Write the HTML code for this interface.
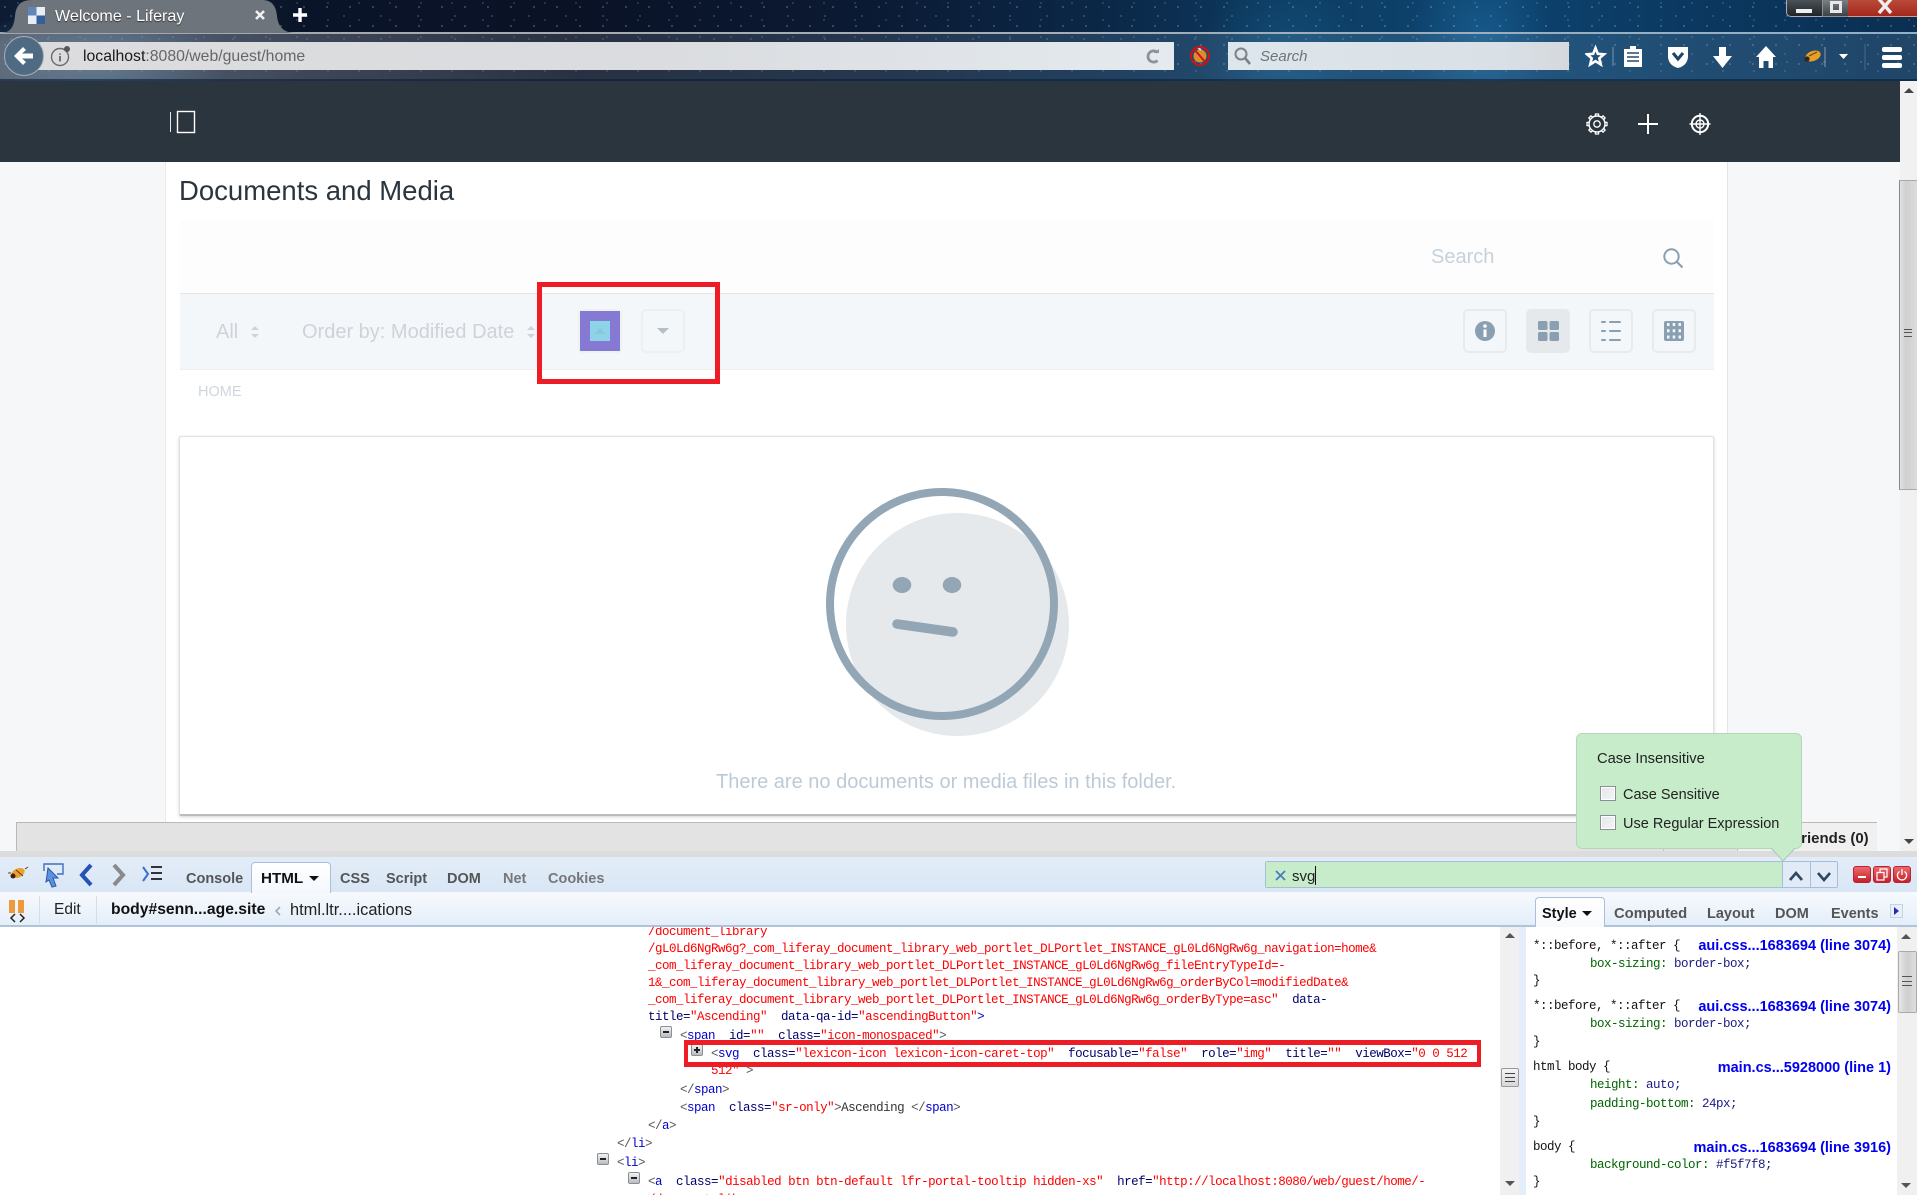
<!DOCTYPE html>
<html lang="en"><head><meta charset="utf-8"><title>Welcome - Liferay</title>
<style>
html,body{margin:0;padding:0;width:1917px;height:1195px;overflow:hidden;background:#fff;font-family:"Liberation Sans",sans-serif}
*{box-sizing:border-box}
.a{position:absolute}
.t{position:absolute;white-space:pre;line-height:20px;margin-top:1px}
.c{position:absolute;white-space:pre;font:12.5px/16px "Liberation Mono",monospace;letter-spacing:-.5px;color:#333;margin-top:1px}
.r{color:#f00}.b{color:#0000d0}.n{color:#00006e}.g{color:#555}.p{color:#006400}.v{color:#1a1a80}.k{color:#111}
.tab{position:absolute;top:862px;margin-top:2px;font:bold 14.5px/30px "Liberation Sans",sans-serif;color:#555;white-space:pre}
.src{position:absolute;right:26px;margin-top:1px;font:bold 14.5px/18px "Liberation Sans",sans-serif;color:#0000f0;white-space:pre}
.btn{position:absolute;top:309px;width:44px;height:44px;border:2px solid #e7ebee;border-radius:5px}
.ex{position:absolute;width:12px;height:12px;border:1px solid #8a8f96;background:linear-gradient(#f2f2f2,#b8bcc2);border-radius:2px}
.ex:after{content:"";position:absolute;left:2px;top:4px;width:6px;height:2px;background:#222}
.arr{position:absolute;width:0;height:0;border-left:5px solid transparent;border-right:5px solid transparent}
.up{border-bottom:5px solid #555}.dn{border-top:5px solid #555}
</style></head><body>

<!-- browser chrome -->
<div class="a" style="left:0;top:0;width:1917px;height:81px;overflow:hidden;background:linear-gradient(90deg,#0d1c33 0,#10233f 6%,#0a1428 16%,#0a1226 30%,#0b1a33 45%,#0b2848 58%,#0d3d63 68%,#0d4470 78%,#0b3860 88%,#0a2f52 100%)">
 <div class="a" style="left:0;top:0;width:100%;height:100%;background:radial-gradient(ellipse 140px 50px at 90px 60px,rgba(90,160,200,.5),transparent),radial-gradient(ellipse 70px 90px at 1480px 40px,rgba(40,130,190,.35),transparent),radial-gradient(ellipse 80px 90px at 1280px 60px,rgba(30,120,170,.3),transparent)"></div>
 <div class="a" style="left:0;top:0;width:100%;height:100%;opacity:.32;background-image:radial-gradient(circle at 5px 7px,#fff .6px,transparent 1.1px),radial-gradient(circle at 18px 3px,#cfe0ff .5px,transparent 1px),radial-gradient(circle at 11px 16px,#fff .5px,transparent 1px);background-size:23px 19px,31px 17px,37px 23px"></div>
 <div class="a" style="left:0;top:34px;width:100%;height:47px;background:linear-gradient(90deg,rgba(150,155,165,.55),rgba(120,130,140,.28) 30%,rgba(120,160,190,.2) 60%,rgba(120,160,190,.2))"></div>
 <div class="a" style="left:0;top:32px;width:100%;height:2px;background:linear-gradient(90deg,#a3a7ad,#a7adb5 50%,#8fb0c8)"></div>
 <div class="a" style="left:0;top:79px;width:100%;height:2px;background:rgba(5,30,60,.6)"></div>
 <!-- tab -->
 <svg class="a" style="left:0;top:0" width="300" height="34"><path d="M0 33C12 33 14 25 15 16C16 6 20 0 32 0H262C272 0 276 6 277 16C278 25 282 33 296 33Z" fill="#6e747c"/></svg>
 <!-- favicon -->
 <div class="a" style="left:28px;top:7px;width:17px;height:17px;background:conic-gradient(#e8eef5 0 25%,#33609a 0 50%,#e8eef5 0 75%,#5f88b8 0)"></div>
 <div class="t" style="left:55px;top:5px;font-size:16.1px;color:#fff;text-shadow:0 1px 1px #333">Welcome - Liferay</div>
 <svg class="a" style="left:254px;top:8px" width="12" height="14"><path d="M2 3L10 11M10 3L2 11" stroke="#f0f0f0" stroke-width="2.6"/></svg>
 <svg class="a" style="left:292px;top:6px" width="16" height="18"><path d="M8 2V16M1 9H15" stroke="#fff" stroke-width="3.4"/></svg>
 <!-- url bar -->
 <div class="a" style="left:30px;top:42px;width:1144px;height:28px;background:linear-gradient(90deg,#dcdcde,#dadcdf 55%,#e4eaef 100%)"></div>
 <div class="a" style="left:4px;top:36px;width:40px;height:40px;border-radius:50%;background:#4f6b84;border:1px solid #a7b0b8"></div>
 <svg class="a" style="left:12px;top:44px" width="24" height="24"><path d="M11 3L2 12L11 21L14 18L10 14.5H21V9.5H10L14 6Z" fill="#fff"/></svg>
 <svg class="a" style="left:50px;top:44px" width="22" height="24"><circle cx="10" cy="13" r="8.5" fill="none" stroke="#6b6b6b" stroke-width="1.4"/><path d="M10 9.5V10.8M10 12V17.5" stroke="#666" stroke-width="1.8"/><circle cx="17" cy="5" r="3" fill="#555"/></svg>
 <div class="t" style="left:83px;top:46px;font-size:15.8px;color:#666"><span style="color:#1a1a1a">localhost</span>:8080/web/guest/home</div>
 <svg class="a" style="left:1146px;top:49px" width="15" height="15"><path d="M11.5 3.5A5.6 5.6 0 1 0 11.5 11.5" fill="none" stroke="#8b9298" stroke-width="2.8"/><path d="M7.5 4H13V0Z" fill="#8b9298"/></svg>
 <svg class="a" style="left:1189px;top:44px" width="22" height="24"><circle cx="11" cy="12" r="6.5" fill="#e08a2c"/><path d="M8 3L12 6" stroke="#ddd" stroke-width="2"/><circle cx="11" cy="12" r="9" fill="none" stroke="#c8141e" stroke-width="2"/><path d="M5 5L17 19" stroke="#c8141e" stroke-width="2"/></svg>
 <!-- search -->
 <div class="a" style="left:1228px;top:42px;width:341px;height:28px;background:linear-gradient(90deg,#dde6ec,#d9e0e6 80%,#d5d9dd)"></div>
 <svg class="a" style="left:1233px;top:46px" width="20" height="20"><circle cx="8" cy="8" r="5.5" fill="none" stroke="#7c8286" stroke-width="2"/><path d="M12 12L17 18" stroke="#7c8286" stroke-width="2.6"/></svg>
 <div class="t" style="left:1260px;top:46px;font-size:15px;font-style:italic;color:#6f7477">Search</div>
 <!-- toolbar icons -->
 <svg class="a" style="left:1585px;top:44px" width="330" height="26">
  <path d="M11 4L13.3 9.8L19.5 10.3L14.8 14.3L16.3 20.5L11 17.2L5.7 20.5L7.2 14.3L2.5 10.3L8.7 9.8Z" fill="none" stroke="#fff" stroke-width="2.6" transform="translate(-.5,0)"/>
  <path d="M28 3V22" stroke="rgba(255,255,255,.4)"/>
  <path d="M40 6H46V3H52V6H58V24H40Z" fill="#fff" transform="translate(-1,-1)"/>
  <path d="M43 10H55M43 14H55M43 18H55" stroke="#2a4a68" stroke-width="1.6" transform="translate(-1,-1)"/>
  <g transform="translate(-1,0)"><path d="M84 3H104V12C104 20 98 23 94 24C90 23 84 20 84 12Z" fill="#fff"/><path d="M89 9L94 15L99 9" fill="none" stroke="#1d4568" stroke-width="3"/></g>
  <path d="M134 3H141V12H147L137.5 24L128 12H134Z" fill="#fff"/>
  <path d="M181 2L191 13H188V24H183.5V17H178.5V24H174V13H171Z" fill="#fff"/>
  <g transform="translate(-2,0)"><ellipse cx="230" cy="12" rx="8" ry="5" transform="rotate(-22 230 12)" fill="#e6a02a"/><circle cx="224" cy="15" r="2.6" fill="#3a2415"/><path d="M226 12L234 8" stroke="#7a3a10" stroke-width="1.2"/></g>
  <path d="M240 3V23" stroke="rgba(255,255,255,.45)"/>
  <path d="M254 10H263L258.5 15Z" fill="#fff"/>
  <path d="M280 0V26" stroke="rgba(255,255,255,.18)"/>
  <g transform="translate(-2,0)"><rect x="299" y="3" width="20" height="5" rx="2" fill="#fff"/><rect x="299" y="11" width="20" height="5" rx="2" fill="#fff"/><rect x="299" y="19" width="20" height="5" rx="2" fill="#fff"/></g>
 </svg>
 <!-- window buttons -->
 <div class="a" style="left:1786px;top:0;width:44px;height:17px;background:linear-gradient(#4a5157,#1f2529);border:1px solid #aab;border-top:0;border-radius:0 0 0 5px"></div>
 <div class="a" style="left:1822px;top:0;width:27px;height:17px;background:linear-gradient(#7a7f84,#3c4247);border:1px solid #8a8f94;border-top:0"></div>
 <div class="a" style="left:1848px;top:0;width:69px;height:17px;background:linear-gradient(#b84a38,#a5281c);border-bottom:1px solid #d98"></div>
 <div class="a" style="left:1796px;top:9px;width:16px;height:4px;background:#f0f0f0"></div>
 <div class="a" style="left:1830px;top:1px;width:12px;height:12px;border:3px solid #e8e8e8"></div>
 <svg class="a" style="left:1876px;top:0" width="18" height="15"><path d="M3 -1L15 13M15 -1L3 13" stroke="#eee" stroke-width="3.4"/></svg>
</div>

<!-- page -->
<div class="a" style="left:0;top:81px;width:1900px;height:81px;background:#2b353d"></div>
<div class="a" style="left:1900px;top:81px;width:17px;height:771px;background:#f1f1f1"></div>
<div class="a" style="left:0;top:162px;width:166px;height:690px;background:#f5f7f8;border-right:1px solid #e7e9eb"></div>
<div class="a" style="left:1727px;top:162px;width:173px;height:690px;background:#f5f7f8;border-left:1px solid #e2e5e8"></div>
<!-- scrollbar -->
<div class="arr up" style="left:1904px;top:88px;border-bottom-color:#444"></div>
<div class="a" style="left:1899px;top:180px;width:18px;height:310px;background:linear-gradient(90deg,#e2e2e2,#cfcfcf 35%,#dcdcdc);border-left:1px solid #888;border-bottom:1px solid #aaa;border-top:1px solid #aaa"></div>
<div class="a" style="left:1904px;top:329px;width:8px;height:8px;border-top:1px solid #555;border-bottom:1px solid #555"><div class="a" style="left:0;top:2px;width:8px;height:1px;background:#555"></div></div>
<div class="arr dn" style="left:1904px;top:839px;border-top-color:#444"></div>

<!-- navbar icons -->
<svg class="a" style="left:165px;top:108px" width="34" height="28"><path d="M5.5 4V24" stroke="#e8e8e8"/><rect x="12.5" y="3.5" width="17" height="21" fill="none" stroke="#fff" stroke-width="1.4"/></svg>
<svg class="a" style="left:1585px;top:112px" width="24" height="24"><circle cx="12" cy="12" r="8" fill="none" stroke="#fff" stroke-width="1.4"/><circle cx="12" cy="12" r="3.2" fill="none" stroke="#fff" stroke-width="1.3"/><g fill="none" stroke="#fff" stroke-width="1.3"><path id="tooth" d="M10.2 4.2L10.5 2H13.5L13.8 4.2"/><path d="M10.2 4.2L10.5 2H13.5L13.8 4.2" transform="rotate(45 12 12)"/><path d="M10.2 4.2L10.5 2H13.5L13.8 4.2" transform="rotate(90 12 12)"/><path d="M10.2 4.2L10.5 2H13.5L13.8 4.2" transform="rotate(135 12 12)"/><path d="M10.2 4.2L10.5 2H13.5L13.8 4.2" transform="rotate(180 12 12)"/><path d="M10.2 4.2L10.5 2H13.5L13.8 4.2" transform="rotate(225 12 12)"/><path d="M10.2 4.2L10.5 2H13.5L13.8 4.2" transform="rotate(270 12 12)"/><path d="M10.2 4.2L10.5 2H13.5L13.8 4.2" transform="rotate(315 12 12)"/></g></svg>
<svg class="a" style="left:1636px;top:112px" width="24" height="24"><path d="M12 2V22M2 12H22" stroke="#fff" stroke-width="2"/></svg>
<svg class="a" style="left:1688px;top:112px" width="24" height="24"><circle cx="12" cy="12" r="8.2" fill="none" stroke="#fff" stroke-width="2"/><circle cx="12" cy="12" r="4" fill="none" stroke="#fff" stroke-width="1.4"/><path d="M12 1V23M1.5 12H22.5" stroke="#fff" stroke-width="1.4"/></svg>

<!-- content -->
<div class="t" style="left:179px;top:174px;font-size:27.5px;line-height:32px;color:#2b353d">Documents and Media</div>
<div class="a" style="left:180px;top:220px;width:1534px;height:73px;background:#fdfdfe"></div>
<div class="a" style="left:180px;top:293px;width:1534px;height:77px;background:#f4f7fa;border-top:1px solid #e3e7ea;border-bottom:1px solid #eceff2"></div>
<div class="t" style="left:1431px;top:246px;font-size:20px;color:#c5d1dc">Search</div>
<svg class="a" style="left:1662px;top:247px" width="22" height="22"><circle cx="9.5" cy="9.5" r="7.2" fill="none" stroke="#8aa0b2" stroke-width="2"/><path d="M14.5 14.5L20.5 20.5" stroke="#8aa0b2" stroke-width="2.2"/></svg>
<div class="t" style="left:216px;top:321px;font-size:20px;color:#ced3da">All</div>
<svg class="a" style="left:250px;top:325px" width="10" height="14"><path d="M1 5L5 1L9 5ZM1 9L5 13L9 9Z" fill="#cdd3d9"/></svg>
<div class="t" style="left:302px;top:321px;font-size:20px;color:#ced3da">Order by: Modified Date</div>
<svg class="a" style="left:526px;top:325px" width="10" height="14"><path d="M1 5L5 1L9 5ZM1 9L5 13L9 9Z" fill="#cdd3d9"/></svg>
<div class="a" style="left:578px;top:309px;width:44px;height:44px;border:2px solid #eef1f4;border-radius:4px"></div>
<div class="a" style="left:580px;top:311px;width:40px;height:40px;background:#8579d3"></div>
<div class="a" style="left:590px;top:321px;width:20px;height:20px;background:#8fd3e8"></div>
<div class="arr" style="left:594px;top:328px;border-left-width:6px;border-right-width:6px;border-bottom:6px solid #87c8dc"></div>
<div class="a" style="left:641px;top:309px;width:44px;height:44px;border:2px solid #ecf0f3;border-radius:5px"></div>
<div class="arr" style="left:657px;top:328px;border-left-width:6px;border-right-width:6px;border-top:6px solid #b3bfc9"></div>
<div class="a" style="left:537px;top:282px;width:183px;height:102px;border:5px solid #ee1c25"></div>
<div class="t" style="left:198px;top:381px;font-size:14.5px;color:#ced6de">HOME</div>

<div class="btn" style="left:1463px"></div>
<svg class="a" style="left:1474px;top:320px" width="22" height="22"><circle cx="11" cy="11" r="10" fill="#8aa0b2"/><path d="M11 9.5V17" stroke="#fff" stroke-width="3"/><circle cx="11" cy="6" r="1.8" fill="#fff"/></svg>
<div class="btn" style="left:1526px;background:#e5e9eb;border-color:#e5e9eb"></div>
<svg class="a" style="left:1538px;top:320px" width="21" height="21"><rect x="0" y="1" width="9.5" height="9" rx="1.5" fill="#8aa0b2"/><rect x="11.5" y="1" width="9.5" height="9" rx="1.5" fill="#8aa0b2"/><rect x="0" y="12" width="9.5" height="9" rx="1.5" fill="#8aa0b2"/><rect x="11.5" y="12" width="9.5" height="9" rx="1.5" fill="#8aa0b2"/></svg>
<div class="btn" style="left:1589px"></div>
<svg class="a" style="left:1600px;top:320px" width="22" height="22"><path d="M2 2H5M10 2H20M2 11H5M10 11H20M2 20H5M10 20H20" stroke="#8aa0b2" stroke-width="2" stroke-linecap="round"/></svg>
<div class="btn" style="left:1652px"></div>
<svg class="a" style="left:1664px;top:321px" width="20" height="20"><rect x="0" y="0" width="20" height="20" rx="2" fill="#8aa0b2"/><path d="M3 3.5H5.5M8.7 3.5H11.2M14.5 3.5H17M3 9.8H5.5M8.7 9.8H11.2M14.5 9.8H17M3 16H5.5M8.7 16H11.2M14.5 16H17" stroke="#f4f7fa" stroke-width="3"/></svg>

<!-- empty card -->
<div class="a" style="left:179px;top:436px;width:1535px;height:380px;background:#fff;border:1px solid #e2e2e2;border-bottom:2px solid #bcbcbc;box-shadow:0 1px 3px rgba(0,0,0,.18);border-radius:2px"></div>
<svg class="a" style="left:800px;top:470px" width="300" height="290">
 <circle cx="157.5" cy="154.5" r="111.5" fill="#e5e9eb"/>
 <circle cx="142" cy="134" r="112" fill="none" stroke="#92a6b6" stroke-width="8"/>
 <ellipse cx="102" cy="115" rx="9.3" ry="8" fill="#92a6b6"/>
 <ellipse cx="152" cy="115" rx="9.3" ry="8" fill="#92a6b6"/>
 <path d="M97 154L153 162" stroke="#92a6b6" stroke-width="9.5" stroke-linecap="round"/>
</svg>
<div class="t" style="left:716px;top:771px;font-size:20px;color:#bdcad6">There are no documents or media files in this folder.</div>

<!-- dock -->
<div class="a" style="left:16px;top:822px;width:1861px;height:30px;background:#e3e3e3;border:1px solid #b9b9b9;border-bottom:0"></div>
<div class="a" style="left:1663px;top:823px;width:1px;height:29px;background:#c4c4c4"></div>
<div class="a" style="left:1737px;top:823px;width:140px;height:29px;background:#f0f0f0;border-left:1px solid #c4c4c4"></div>
<div class="t" style="left:1792px;top:828px;font-size:15px;font-weight:bold;color:#222">Friends (0)</div>

<!-- firebug -->
<div class="a" style="left:0;top:851px;width:1917px;height:7px;background:#dcdcdc"></div>
<div class="a" style="left:0;top:857px;width:1917px;height:36px;background:linear-gradient(#e2edf8,#d9e6f4);border-bottom:1px solid #a9c0dc"></div>
<div class="a" style="left:0;top:892px;width:1917px;height:35px;background:linear-gradient(#f7fafe,#e4eef9);border-bottom:2px solid #b0c3dc"></div>

<svg class="a" style="left:6px;top:862px" width="160" height="30">
 <ellipse cx="12" cy="11" rx="7" ry="4.5" transform="rotate(-25 12 11)" fill="#e8a32c"/><circle cx="7" cy="14" r="2.5" fill="#3a2415"/><path d="M10 8L17 14M2 11H5M19 7L22 5" stroke="#6b3b12"/>
 <g transform="translate(1,-1)"><path d="M37 10V3H56V13H50" fill="none" stroke="#3f6fc0" stroke-width="1.4"/><path d="M41 7L51 17L46 17L49 25L45 26L42 19L39 21Z" fill="#5d93de" stroke="#2a55a8"/></g>
 <path d="M85 3L76 13L85 23" fill="none" stroke="#2553b5" stroke-width="4"/>
 <path d="M108 3L117 13L108 23" fill="none" stroke="#8a8a8a" stroke-width="4"/>
 <path d="M137 5L142 12L137 19" fill="none" stroke="#3a6fd0" stroke-width="2"/><path d="M145 5H156M145 11H156M145 17H156" stroke="#333" stroke-width="2"/>
</svg>
<div class="tab" style="left:186px">Console</div>
<div class="a" style="left:251px;top:862px;width:80px;height:31px;background:linear-gradient(#fff,#f4f8fd);border:1px solid #a9c0dc;border-bottom:0;border-radius:4px 4px 0 0"></div>
<div class="tab" style="left:261px;color:#111;font-size:15.2px">HTML</div>
<div class="arr" style="left:309px;top:876px;border-top:5px solid #111"></div>
<div class="tab" style="left:340px">CSS</div>
<div class="tab" style="left:386px">Script</div>
<div class="tab" style="left:447px">DOM</div>
<div class="tab" style="left:503px;color:#777">Net</div>
<div class="tab" style="left:548px;color:#777">Cookies</div>

<!-- firebug row 2 -->
<svg class="a" style="left:8px;top:899px" width="20" height="26"><path d="M1 1H7V14H1ZM10 1H16V14H10Z" fill="#ee9a3a"/><path d="M12 15L16 19L12 23M7 15L3 19L7 23" fill="none" stroke="#222" stroke-width="1.5"/></svg>
<div class="a" style="left:39px;top:896px;width:1px;height:28px;background:#d4dde8"></div>
<div class="a" style="left:96px;top:896px;width:1px;height:28px;background:#d4dde8"></div>
<div class="t" style="left:54px;top:899px;font-size:15.5px;color:#222">Edit</div>
<div class="t" style="left:111px;top:899px;font-size:15.7px;font-weight:bold;color:#111">body#senn...age.site</div>
<svg class="a" style="left:274px;top:905px" width="8" height="12"><path d="M6 2L2 6L6 10" fill="none" stroke="#9fa9b3" stroke-width="1.6"/></svg>
<div class="t" style="left:290px;top:899px;font-size:16.4px;color:#222">html.ltr....ications</div>

<!-- find box -->
<div class="a" style="left:1265px;top:861px;width:573px;height:27px;background:#e0ebf7;border:1px solid #a9bdd6;border-radius:2px"></div>
<div class="a" style="left:1266px;top:862px;width:516px;height:25px;background:#c6ecc9"></div>
<div class="a" style="left:1782px;top:862px;width:1px;height:25px;background:#a9bdd6"></div>
<div class="a" style="left:1810px;top:862px;width:1px;height:25px;background:#a9bdd6"></div>
<svg class="a" style="left:1275px;top:870px" width="11" height="11"><path d="M1 1L10 10M10 1L1 10" stroke="#4a7cc0" stroke-width="1.8"/></svg>
<div class="t" style="left:1292px;top:866px;font-size:15px;color:#222">svg</div>
<div class="a" style="left:1315px;top:866px;width:1px;height:19px;background:#111"></div>
<svg class="a" style="left:1788px;top:869px" width="46" height="14"><path d="M2 11L8 4L14 11" fill="none" stroke="#2e465f" stroke-width="2.6"/><path d="M30 4L36 11L42 4" fill="none" stroke="#2e465f" stroke-width="2.6"/></svg>
<div class="a" style="left:1853px;top:866px;width:18px;height:17px;background:linear-gradient(#ec6a6a,#c8202a);border:1px solid #b23;border-radius:3px"></div>
<div class="a" style="left:1858px;top:876px;width:8px;height:2px;background:#fff"></div>
<div class="a" style="left:1873px;top:866px;width:18px;height:17px;background:linear-gradient(#ec6a6a,#c8202a);border:1px solid #b23;border-radius:3px"></div>
<svg class="a" style="left:1876px;top:868px" width="12" height="13"><path d="M1 4.5H8V12H1ZM4 4V1H11V9H8" fill="none" stroke="#fff" stroke-width="1.2"/></svg>
<div class="a" style="left:1893px;top:866px;width:18px;height:17px;background:linear-gradient(#ec6a6a,#c8202a);border:1px solid #b23;border-radius:3px"></div>
<svg class="a" style="left:1896px;top:868px" width="12" height="13"><path d="M3.5 3.5A4.6 4.6 0 1 0 8.5 3.5M6 1V7" fill="none" stroke="#fff" stroke-width="1.3"/></svg>

<!-- popup -->
<div class="a" style="left:1576px;top:733px;width:226px;height:116px;background:#c6ecc9;border:1px solid #b6d6ba;border-radius:6px"></div>
<svg class="a" style="left:1770px;top:848px" width="26" height="14"><path d="M1 0L13 13L25 0Z" fill="#c6ecc9"/><path d="M1 0L13 13L25 0" fill="none" stroke="#aac8b6"/></svg>
<div class="t" style="left:1597px;top:748px;font-size:14.7px;color:#222">Case Insensitive</div>
<div class="a" style="left:1600px;top:786px;width:16px;height:15px;background:linear-gradient(135deg,#e4e6ea,#f4f5f7);border:1px solid #8a8f96;box-shadow:inset 0 0 0 1px #fff"></div>
<div class="t" style="left:1623px;top:784px;font-size:14.5px;color:#222">Case Sensitive</div>
<div class="a" style="left:1600px;top:815px;width:16px;height:15px;background:linear-gradient(135deg,#e4e6ea,#f4f5f7);border:1px solid #8a8f96;box-shadow:inset 0 0 0 1px #fff"></div>
<div class="t" style="left:1623px;top:813px;font-size:14.5px;color:#222">Use Regular Expression</div>

<!-- side tabs -->
<div class="a" style="left:1535px;top:897px;width:70px;height:31px;background:linear-gradient(#fff,#f7fafd);border:1px solid #a9c0dc;border-bottom:0;border-radius:4px 4px 0 0"></div>
<div class="tab" style="left:1542px;top:897px;color:#111">Style</div>
<div class="arr" style="left:1582px;top:911px;border-top:5px solid #111"></div>
<div class="tab" style="left:1614px;top:897px;font-size:14.8px">Computed</div>
<div class="tab" style="left:1707px;top:897px">Layout</div>
<div class="tab" style="left:1775px;top:897px">DOM</div>
<div class="tab" style="left:1831px;top:897px">Events</div>
<div class="a" style="left:1890px;top:904px;width:13px;height:14px;background:#e8f0fa;border:1px solid #c3d2e4"></div>
<div class="a" style="left:1894px;top:907px;width:0;height:0;border-top:4px solid transparent;border-bottom:4px solid transparent;border-left:5px solid #2a2ab0"></div>

<!-- html pane -->
<div class="a" style="left:0;top:927px;width:1500px;height:268px;overflow:hidden;background:#fff">
 <div class="c r" style="left:648px;top:-4px">/document_library</div>
 <div class="c r" style="left:648px;top:13px">/gL0Ld6NgRw6g?_com_liferay_document_library_web_portlet_DLPortlet_INSTANCE_gL0Ld6NgRw6g_navigation=home&amp;</div>
 <div class="c r" style="left:648px;top:30px">_com_liferay_document_library_web_portlet_DLPortlet_INSTANCE_gL0Ld6NgRw6g_fileEntryTypeId=-</div>
 <div class="c r" style="left:648px;top:47px">1&amp;_com_liferay_document_library_web_portlet_DLPortlet_INSTANCE_gL0Ld6NgRw6g_orderByCol=modifiedDate&amp;</div>
 <div class="c" style="left:648px;top:64px"><span class="r">_com_liferay_document_library_web_portlet_DLPortlet_INSTANCE_gL0Ld6NgRw6g_orderByType=asc"</span>  <span class="n">data-</span></div>
 <div class="c" style="left:648px;top:81px"><span class="n">title=</span><span class="r">"Ascending"</span>  <span class="n">data-qa-id=</span><span class="r">"ascendingButton"</span><span class="b">&gt;</span></div>
 <div class="ex" style="left:660px;top:99px"></div>
 <div class="c" style="left:680px;top:100px"><span class="g">&lt;</span><span class="b">span</span>  <span class="n">id=</span><span class="r">""</span>  <span class="n">class=</span><span class="r">"icon-monospaced"</span><span class="g">&gt;</span></div>
 <div class="ex" style="left:691px;top:117px;background:linear-gradient(#f2f2f2,#b8bcc2)"><div class="a" style="left:4px;top:2px;width:2px;height:6px;background:#222"></div></div>
 <div class="c" style="left:711px;top:118px"><span class="g">&lt;</span><span class="b">svg</span>  <span class="n">class=</span><span class="r">"lexicon-icon lexicon-icon-caret-top"</span>  <span class="n">focusable=</span><span class="r">"false"</span>  <span class="n">role=</span><span class="r">"img"</span>  <span class="n">title=</span><span class="r">""</span>  <span class="n">viewBox=</span><span class="r">"0 0 512</span></div>
 <div class="c" style="left:711px;top:135px"><span class="r">512"</span> <span class="g">&gt;</span></div>
 <div class="c" style="left:680px;top:154px"><span class="g">&lt;/</span><span class="b">span</span><span class="g">&gt;</span></div>
 <div class="c" style="left:680px;top:172px"><span class="g">&lt;</span><span class="b">span</span>  <span class="n">class=</span><span class="r">"sr-only"</span><span class="g">&gt;</span><span style="color:#333">Ascending</span> <span class="g">&lt;/</span><span class="b">span</span><span class="g">&gt;</span></div>
 <div class="c" style="left:648px;top:190px"><span class="g">&lt;/</span><span class="b">a</span><span class="g">&gt;</span></div>
 <div class="c" style="left:617px;top:208px"><span class="g">&lt;/</span><span class="b">li</span><span class="g">&gt;</span></div>
 <div class="ex" style="left:597px;top:226px"></div>
 <div class="c" style="left:617px;top:227px"><span class="g">&lt;</span><span class="b">li</span><span class="g">&gt;</span></div>
 <div class="ex" style="left:628px;top:245px"></div>
 <div class="c" style="left:648px;top:246px"><span class="g">&lt;</span><span class="b">a</span>  <span class="n">class=</span><span class="r">"disabled btn btn-default lfr-portal-tooltip hidden-xs"</span>  <span class="n">href=</span><span class="r">"http://localhost:8080/web/guest/home/-</span></div>
 <div class="c r" style="left:648px;top:264px">/document_library</div>
</div>
<div class="a" style="left:684px;top:1040px;width:797px;height:27px;border:5px solid #ee1c25;border-left-width:4px;border-right-width:4px"></div>

<!-- panel scrollbars -->
<div class="a" style="left:1500px;top:927px;width:19px;height:268px;background:#f0f0f0"></div>
<div class="arr up" style="left:1505px;top:933px"></div>
<div class="arr dn" style="left:1505px;top:1181px"></div>
<div class="a" style="left:1501px;top:1068px;width:18px;height:19px;background:linear-gradient(#f4f4f4,#d8d8d8);border:1px solid #999;border-radius:2px"></div>
<div class="a" style="left:1505px;top:1073px;width:10px;height:9px;border-top:1px solid #444;border-bottom:1px solid #444"><div class="a" style="left:0;top:3px;width:10px;height:1px;background:#444"></div></div>
<div class="a" style="left:1519px;top:927px;width:7px;height:268px;background:#e4eef9"></div>

<!-- style pane -->
<div class="a" style="left:1526px;top:927px;width:371px;height:268px;background:#fff"></div>
<div class="c k" style="left:1533px;top:937px">*::before, *::after {</div>
<div class="src" style="top:936px">aui.css...1683694 (line 3074)</div>
<div class="c" style="left:1590px;top:955px"><span class="p">box-sizing:</span> <span class="v">border-box;</span></div>
<div class="c k" style="left:1533px;top:972px">}</div>
<div class="c k" style="left:1533px;top:997px">*::before, *::after {</div>
<div class="src" style="top:997px">aui.css...1683694 (line 3074)</div>
<div class="c" style="left:1590px;top:1015px"><span class="p">box-sizing:</span> <span class="v">border-box;</span></div>
<div class="c k" style="left:1533px;top:1033px">}</div>
<div class="c k" style="left:1533px;top:1058px">html body {</div>
<div class="src" style="top:1058px">main.cs...5928000 (line 1)</div>
<div class="c" style="left:1590px;top:1076px"><span class="p">height:</span> <span class="v">auto;</span></div>
<div class="c" style="left:1590px;top:1095px"><span class="p">padding-bottom:</span> <span class="v">24px;</span></div>
<div class="c k" style="left:1533px;top:1113px">}</div>
<div class="c k" style="left:1533px;top:1138px">body {</div>
<div class="src" style="top:1138px">main.cs...1683694 (line 3916)</div>
<div class="c" style="left:1590px;top:1156px"><span class="p">background-color:</span> <span class="v">#f5f7f8;</span></div>
<div class="c k" style="left:1533px;top:1173px">}</div>

<div class="a" style="left:1897px;top:927px;width:20px;height:268px;background:#f0f0f0"></div>
<div class="arr up" style="left:1901px;top:934px"></div>
<div class="arr dn" style="left:1901px;top:1183px"></div>
<div class="a" style="left:1898px;top:951px;width:19px;height:62px;background:linear-gradient(90deg,#e6e6e6,#cfcfcf 50%,#dedede);border:1px solid #aaa;border-radius:2px"></div>
<div class="a" style="left:1902px;top:976px;width:10px;height:10px;border-top:1px solid #555;border-bottom:1px solid #555"><div class="a" style="left:0;top:4px;width:10px;height:1px;background:#555"></div></div>
</body></html>
